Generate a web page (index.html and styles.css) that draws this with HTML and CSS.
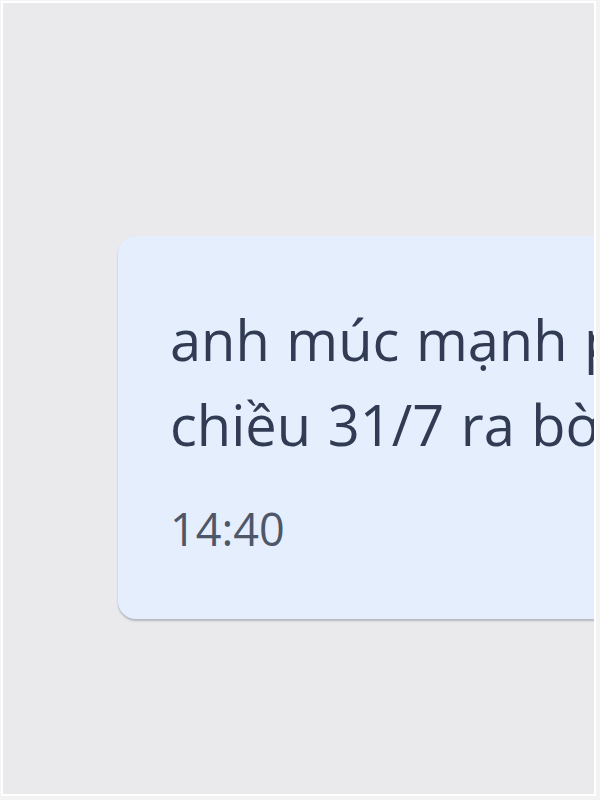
FILE: index.html
```html
<!DOCTYPE html>
<html lang="vi">
<head>
    <meta charset="UTF-8">
    <title>Tin nhắn</title>
    <link rel="stylesheet" href="styles.css">
</head>
<body>
    <div class="frame">
        <div class="chat">
            <div class="bubble">
                <p class="message">anh múc mạnh phải không em<br>chiều 31/7 ra bờ sông nhé</p>
                <span class="time">14:40</span>
            </div>
        </div>
    </div>
</body>
</html>
```

FILE: styles.css
```css
body {
    margin: 0;
    background-color: #f3f3f4;
    font-family: 'Open Sans', 'Liberation Sans', sans-serif;
}
.frame {
    margin: 1px 0 0 1px;
    width: 595px;
    height: 795px;
    box-sizing: border-box;
    border: 2px solid #fff;
    background-color: #eaeaec;
    overflow: hidden;
}
.chat {
    padding: 233px 0 0 115px;
}
.bubble {
    width: 700px;
    background-color: #e4eefc;
    border-radius: 18px;
    padding: 61px 0 60px 52px;
    box-shadow: 0 2px 2px rgba(60, 70, 90, 0.3);
}
.message {
    margin: 0;
    font-size: 56px;
    font-weight: 500;
    line-height: 85px;
    color: #313c54;
    white-space: nowrap;
    word-spacing: 2px;
}
.time {
    display: block;
    margin-top: 32px;
    font-size: 45px;
    font-weight: 500;
    line-height: 60px;
    color: #4e5669;
}
```
